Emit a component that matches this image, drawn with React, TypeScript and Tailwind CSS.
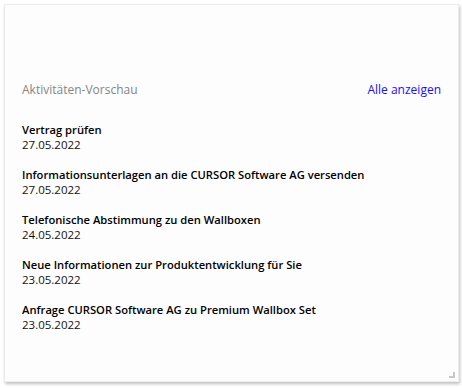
import React from "react";

const activities = [
  { title: "Vertrag prüfen", date: "27.05.2022" },
  { title: "Informationsunterlagen an die CURSOR Software AG versenden", date: "27.05.2022" },
  { title: "Telefonische Abstimmung zu den Wallboxen", date: "24.05.2022" },
  { title: "Neue Informationen zur Produktentwicklung für Sie", date: "23.05.2022" },
  { title: "Anfrage CURSOR Software AG zu Premium Wallbox Set", date: "23.05.2022" },
];

export default function App() {
  return (
    <div className="w-[462px] h-[388px] bg-white p-[4px] pr-[3px] pb-[6px] font-['Open_Sans',sans-serif] text-[11.5px]">
      {/* CARD */}
      <div className="relative h-full bg-[#fdfdfd] border border-[#ececec] shadow-[1px_2px_3px_rgba(0,0,0,0.25)] pl-[17px] pr-[17px] pt-[77px]">
        <div className="flex items-center justify-between leading-[16px]">
          <span className="text-[#858585] text-[12px]">Aktivitäten-Vorschau</span>
          <a className="text-[#1a0dff] text-[12px]">Alle anzeigen</a>
        </div>

        <div className="mt-[24px] flex flex-col gap-[15px]">
          {activities.map((a, i) => (
            <div key={i} className="leading-[15px] text-black">
              <div className="font-semibold text-[11.2px]">{a.title}</div>
              <div className="text-[#111]">{a.date}</div>
            </div>
          ))}
        </div>

        {/* resize grip */}
        <svg className="absolute right-[3px] bottom-[3px]" width="6" height="6" viewBox="0 0 6 6">
          <rect x="4" y="0" width="2" height="6" fill="#c8c8c8" />
          <rect x="0" y="4" width="6" height="2" fill="#c8c8c8" />
        </svg>
      </div>
    </div>
  );
}
